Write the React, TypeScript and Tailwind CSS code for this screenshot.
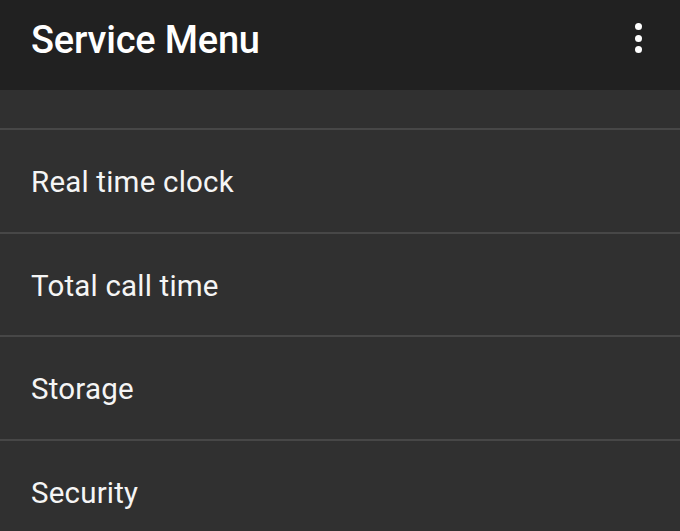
const ITEMS = ["Real time clock", "Total call time", "Storage", "Security"];

export default function App() {
  return (
    <div
      className="w-[680px] h-[531px] overflow-hidden bg-[#303030] text-white"
      style={{ fontFamily: "Roboto, 'Noto Sans', sans-serif" }}
    >
      {/* App bar */}
      <header className="h-[90px] bg-[#212121] flex items-center justify-between pl-[31px] pr-[38px]">
        <h1 className="text-[38px] font-medium tracking-[-0.2px] leading-none pb-[10px]">Service Menu</h1>
        <div className="flex flex-col items-center gap-[4.5px] pb-[14px]">
          <span className="w-[7px] h-[7px] rounded-full bg-white" />
          <span className="w-[7px] h-[7px] rounded-full bg-white" />
          <span className="w-[7px] h-[7px] rounded-full bg-white" />
        </div>
      </header>

      <div className="h-[38px]" />

      {/* List */}
      <ul>
        {ITEMS.map((item) => (
          <li
            key={item}
            className="h-[103.5px] border-t-2 border-[#474747] flex items-center pl-[31px] pt-[3px] text-[29.5px] tracking-[0.2px] text-[#f5f5f5]"
          >
            {item}
          </li>
        ))}
      </ul>
    </div>
  );
}
